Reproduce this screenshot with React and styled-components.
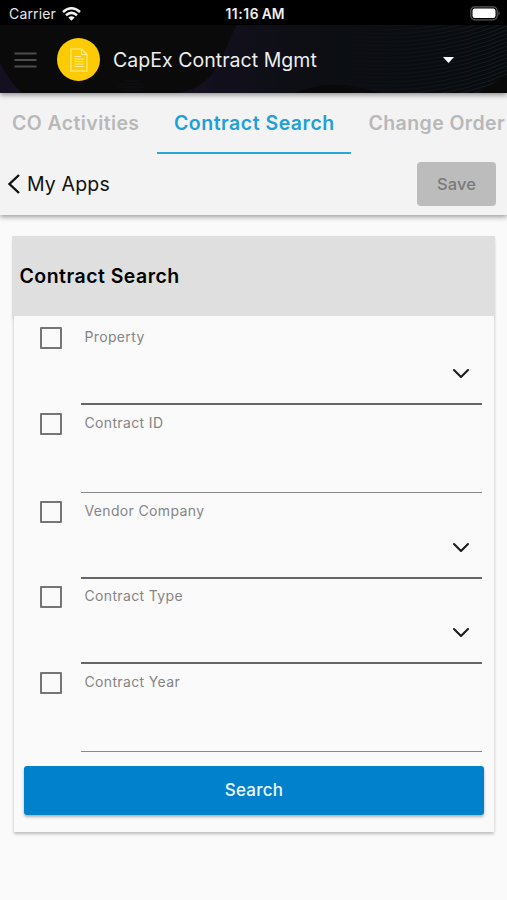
import React from "react";
import styled, { createGlobalStyle } from "styled-components";

const GlobalStyle = createGlobalStyle`
  * { box-sizing: border-box; }
  body {
    margin: 0;
    background: #fafafa;
    font-family: Inter, "Liberation Sans", sans-serif;
    color: #000;
  }
  button { font-family: inherit; border: 0; padding: 0; }
`;

const Screen = styled.div`
  width: 507px;
  height: 900px;
  overflow: hidden;
  background: #fafafa;
  display: flex;
  flex-direction: column;
`;

const StatusBar = styled.div`
  height: 25px;
  flex: none;
  background: #000;
  color: #e6e6e6;
  display: grid;
  grid-template-columns: 1fr auto 1fr;
  align-items: center;
  padding: 2px 6px 0 9px;
  font-size: 14px;
`;

const Carrier = styled.div`
  display: flex;
  align-items: center;
  gap: 6px;
  letter-spacing: 0.16px;
`;

const Clock = styled.div`
  font-size: 13.8px;
  font-weight: 600;
  letter-spacing: 0.6px;
  word-spacing: -1.4px;
  color: #f0f0f0;
`;

const Meridiem = styled.span`
  letter-spacing: 0;
`;

const Battery = styled.svg`
  justify-self: end;
  margin-bottom: 1px;
`;

const AppBar = styled.header`
  position: relative;
  z-index: 2;
  height: 68px;
  flex: none;
  display: flex;
  align-items: center;
  background: #0a0a0b;
  box-shadow: 0 2px 5px rgba(0, 0, 0, 0.42);
`;

const Backdrop = styled.svg`
  position: absolute;
  inset: 0;
`;

const MenuIcon = styled.svg`
  position: relative;
  margin: 1px 0 0 14px;
`;

const AppBadge = styled.div`
  position: relative;
  width: 43px;
  height: 43px;
  margin: 1px 0 0 20px;
  border-radius: 50%;
  background: #fdcb03;
  display: flex;
  align-items: center;
  justify-content: center;
`;

const AppTitle = styled.h1`
  position: relative;
  margin: 2px 0 0 13px;
  flex: 1;
  font-size: 19.5px;
  font-weight: 400;
  letter-spacing: 0.04px;
  color: #ededed;
`;

const Caret = styled.svg`
  position: relative;
  margin: 2px 53px 0 0;
`;

const NavPanel = styled.nav`
  position: relative;
  z-index: 1;
  height: 122px;
  flex: none;
  background: #f3f3f3;
  box-shadow: 0 2px 5px rgba(0, 0, 0, 0.38);
`;

const Tabs = styled.div`
  display: flex;
  height: 61px;
  overflow: hidden;
`;

const Tab = styled.div`
  flex: none;
  width: ${(p) => p.$width}px;
  padding-left: ${(p) => p.$inset}px;
  border-bottom: 2.5px solid ${(p) => (p.$active ? "#28a5dc" : "transparent")};
  color: ${(p) => (p.$active ? "#219fd7" : "#b8b8b8")};
  font-size: 19.5px;
  font-weight: 600;
  line-height: 60px;
  letter-spacing: ${(p) => p.$tracking}px;
  white-space: nowrap;
`;

const ActionRow = styled.div`
  height: 61px;
  display: flex;
  align-items: center;
  justify-content: space-between;
  padding: 0 11px 0 7px;
`;

const BackLink = styled.div`
  display: flex;
  align-items: center;
  gap: 6px;
  margin-bottom: 1px;
  font-size: 19.5px;
  letter-spacing: 0.15px;
  color: #111;
`;

const SaveButton = styled.button`
  width: 79px;
  height: 44px;
  margin-bottom: 2px;
  border-radius: 4px;
  background: #bcbcbc;
  color: #7a7a7a;
  font-size: 16.5px;
  font-weight: 500;
  letter-spacing: 0.1px;
`;

const Card = styled.section`
  width: 480px;
  height: 596px;
  margin: 21px 0 0 14px;
  display: flex;
  flex-direction: column;
  box-shadow: 0 2px 3px rgba(0, 0, 0, 0.25);
`;

const CardHeader = styled.div`
  height: 80px;
  flex: none;
  margin: 0 -1px 0 -2px;
  padding-left: 7.5px;
  display: flex;
  align-items: center;
  background: #dfdfdf;
  box-shadow: 0 5px 3px -1px rgba(0, 0, 0, 0.1);
`;

const CardTitle = styled.h2`
  margin: 0;
  font-size: 19.5px;
  font-weight: 600;
  letter-spacing: 0.47px;
`;

const CardBody = styled.div`
  position: relative;
  flex: 1;
  background: #fafafa;
  padding: 3.5px 10px 0;
`;

const FieldRow = styled.div`
  display: flex;
  height: ${(p) => (p.$select ? 85.5 : 88)}px;
  padding: 0 2px 0 16px;
`;

const Checkbox = styled.div`
  width: 22px;
  height: 22px;
  margin: 7.5px 18.5px 0 0;
  border: 2px solid #757575;
  border-radius: 1px;
`;

const Field = styled.div`
  flex: 1;
  display: flex;
  flex-direction: column;
  justify-content: space-between;
  padding: 7.5px 0 24px 4px;
  border-bottom: ${(p) => (p.$select ? "2px solid #666" : "1px solid #8a8a8a")};
`;

const Label = styled.label`
  font-size: 14px;
  line-height: 20px;
  letter-spacing: 0.35px;
  color: #858585;
`;

const Chevron = styled.svg`
  align-self: flex-end;
  margin-right: 12px;
`;

const SearchButton = styled.button`
  display: block;
  width: 460px;
  height: 49px;
  margin-top: 14px;
  padding-bottom: 2px;
  border-radius: 3px;
  background: #0181cc;
  color: #eef8ff;
  font-size: 17px;
  font-weight: 500;
  letter-spacing: 0.25px;
  box-shadow: 0 2px 3px rgba(0, 0, 0, 0.3);
`;

const fields = [
  { label: "Property", select: true },
  { label: "Contract ID", select: false },
  { label: "Vendor Company", select: true },
  { label: "Contract Type", select: true },
  { label: "Contract Year", select: false },
];

const waves = Array.from({ length: 24 }, (_, i) => i);

function HeaderBackdrop() {
  return (
    <Backdrop width="507" height="68" viewBox="0 0 507 68">
      <defs>
        <linearGradient id="tint" x1="0" x2="1">
          <stop offset="0" stopColor="#151022" />
          <stop offset="0.35" stopColor="#0d0f15" />
          <stop offset="1" stopColor="#080b0e" />
        </linearGradient>
        <linearGradient id="fade" x1="340" x2="507" gradientUnits="userSpaceOnUse">
          <stop offset="0" stopColor="#1a2227" stopOpacity="0" />
          <stop offset="1" stopColor="#192327" />
        </linearGradient>
      </defs>
      <path d="M237 0C226 18 222 43 205 56Q194 66 177 68H507V0Z" fill="url(#tint)" />
      <path d="M0 38Q8 55 22 68H0Z" fill="#151020" />
      <path d="M295 68Q333 52 380 68Z" fill="#09090a" />
      {waves.map((i) => (
        <path
          key={i}
          d={`M340 ${i * 4 - 14}Q430 ${i * 4 - 3} 507 ${i * 4 - 35}`}
          fill="none"
          stroke="url(#fade)"
          strokeWidth="0.8"
        />
      ))}
      <path d="M507 50Q490 61 478 68H507Z" fill="#09090a" />
      <path d="M125 56H140M120 59H143M118 62H145M122 65H140" stroke="#15151b" strokeWidth="0.7" />
    </Backdrop>
  );
}

export default function App() {
  return (
    <>
      <GlobalStyle />
      <Screen>
        <StatusBar>
          <Carrier>
            <span>Carrier</span>
            <svg width="19" height="14" viewBox="0 0 19 14" fill="none" stroke="#f2f2f2" strokeWidth="2.5">
              <path d="M1 5Q9.5 -2.4 18 5" />
              <path d="M4 8.3Q9.5 3.4 15 8.3" />
              <path d="M6.4 10.6Q9.5 8 12.6 10.6L9.5 13.7Z" fill="#f2f2f2" stroke="none" />
            </svg>
          </Carrier>
          <Clock>11:16 <Meridiem>AM</Meridiem></Clock>
          <Battery width="31" height="15" viewBox="0 0 31 15">
            <rect x="0.8" y="0.8" width="26.4" height="13" rx="4" fill="none" stroke="#5b5b5b" strokeWidth="1.2" />
            <rect x="2.5" y="2.5" width="23" height="9.6" rx="2.4" fill="#fff" />
            <path d="M28.5 5Q31 7.3 28.5 9.6Z" fill="#5b5b5b" />
          </Battery>
        </StatusBar>

        <AppBar>
          <HeaderBackdrop />
          <MenuIcon width="23" height="16" viewBox="0 0 23 16" stroke="#4d4d4d" strokeWidth="2">
            <path d="M0.5 1.5H22.5M0.5 8H22.5M0.5 14.5H22.5" />
          </MenuIcon>
          <AppBadge>
            <svg width="18" height="24" viewBox="0 0 18 24" fill="none" stroke="#ffed9c" strokeWidth="1.1">
              <path d="M1 1H11.5L17 6.5V23H1Z" />
              <path d="M11.5 1V6.5H17" />
              <path d="M4.5 8.5H11M4.5 11H13.5M4.5 13.5H13.5M4.5 16H13.5M4.5 18.5H13.5" />
            </svg>
          </AppBadge>
          <AppTitle>CapEx Contract Mgmt</AppTitle>
          <Caret width="11" height="6" viewBox="0 0 11 6">
            <path d="M0 0H11L5.5 6Z" fill="#fff" />
          </Caret>
        </AppBar>

        <NavPanel>
          <Tabs>
            <Tab $width={157} $inset={12} $tracking={0.4}>CO Activities</Tab>
            <Tab $active $width={194} $inset={17} $tracking={0.5}>Contract Search</Tab>
            <Tab $width={194} $inset={17.5} $tracking={0.4}>Change Order</Tab>
          </Tabs>
          <ActionRow>
            <BackLink>
              <svg width="14" height="20" viewBox="0 0 14 20" fill="none" stroke="#111" strokeWidth="2.4">
                <path d="M12 1L2.5 10L12 19" />
              </svg>
              <span>My Apps</span>
            </BackLink>
            <SaveButton>Save</SaveButton>
          </ActionRow>
        </NavPanel>

        <Card>
          <CardHeader>
            <CardTitle>Contract Search</CardTitle>
          </CardHeader>
          <CardBody>
            {fields.map(({ label, select }) => (
              <FieldRow key={label} $select={select}>
                <Checkbox />
                <Field $select={select}>
                  <Label>{label}</Label>
                  {select && (
                    <Chevron width="18" height="11" viewBox="0 0 18 11" fill="none" stroke="#1c1c1c" strokeWidth="2.1" strokeLinecap="round" strokeLinejoin="round">
                      <path d="M2 2L9 9L16 2" />
                    </Chevron>
                  )}
                </Field>
              </FieldRow>
            ))}
            <SearchButton>Search</SearchButton>
          </CardBody>
        </Card>
      </Screen>
    </>
  );
}
